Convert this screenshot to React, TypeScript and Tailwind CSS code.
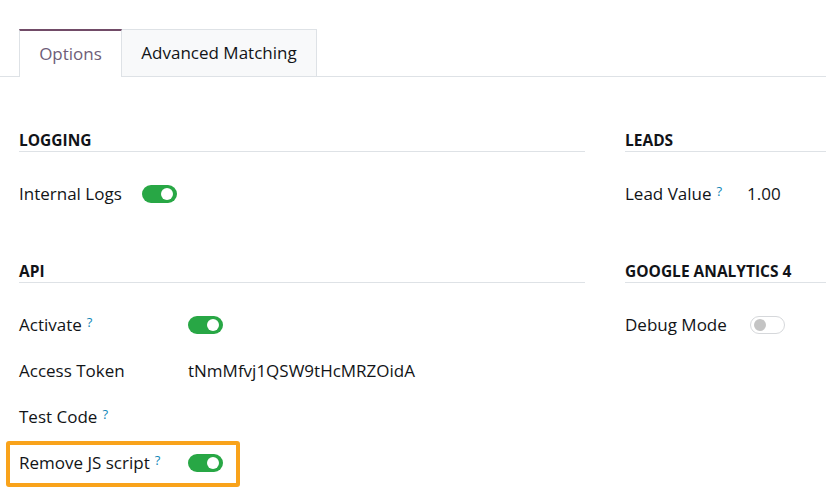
import React from "react";

function Toggle({ on }: { on: boolean }) {
  return on ? (
    <span className="relative inline-block h-[18px] w-[35px] rounded-full bg-[#28a745]">
      <span className="absolute right-[4px] top-[3px] h-[12px] w-[12px] rounded-full bg-white" />
    </span>
  ) : (
    <span className="relative inline-block h-[18px] w-[35px] rounded-full border border-[#d6d8db] bg-white">
      <span className="absolute left-[3px] top-[2px] h-[12px] w-[12px] rounded-full bg-[#c4c4c4]" />
    </span>
  );
}

function Q() {
  return <sup className="relative -top-[4px] ml-[5px] text-[13px] font-normal text-[#1287b8]">?</sup>;
}

function Heading({ children }: { children: React.ReactNode }) {
  return (
    <div className="border-b border-[#dee2e6] pb-px text-[15.5px] font-bold leading-[20px] text-[#111318]">
      {children}
    </div>
  );
}

function Row({
  label,
  help,
  labelW,
  children,
}: {
  label: string;
  help?: boolean;
  labelW: string;
  children?: React.ReactNode;
}) {
  return (
    <div className="flex h-[46px] items-center pb-[3px]">
      <div className={`${labelW} shrink-0 text-[17px] leading-[22px] text-[#121417]`}>
        {label}
        {help && <Q />}
      </div>
      <div className="flex items-center text-[17px] leading-[22px] text-[#121417]">{children}</div>
    </div>
  );
}

export default function App() {
  return (
    <div
      className="h-[496px] w-[826px] overflow-hidden bg-white"
      style={{ fontFamily: '"Open Sans", "Noto Sans", sans-serif' }}
    >
      <div className="pt-[29px]">
        <div className="flex border-b border-[#dee2e6] pl-[19px]">
          <div className="-mb-px flex h-[48px] w-[103px] items-center justify-center border-x border-t-2 border-x-[#dee2e6] border-t-[#714b67] bg-white text-[17px] text-[#6e5d78]">
            Options
          </div>
          <div className="flex h-[47px] w-[195px] items-center justify-center border-r border-t border-[#dee2e6] bg-[#f8f9fa] text-[17px] text-[#121417]">
            Advanced Matching
          </div>
        </div>
      </div>

      <div className="flex gap-[40px] pl-[19px] pt-[53px]">
        <div className="w-[566px] shrink-0">
          <Heading>LOGGING</Heading>
          <div className="mt-[20px]">
            <Row label="Internal Logs" labelW="w-[123px]">
              <Toggle on />
            </Row>
          </div>
          <div className="mt-[43px]">
            <Heading>API</Heading>
          </div>
          <div className="mt-[20px]">
            <Row label="Activate" help labelW="w-[169px]">
              <Toggle on />
            </Row>
            <Row label="Access Token" labelW="w-[169px]">
              tNmMfvj1QSW9tHcMRZOidA
            </Row>
            <Row label="Test Code" help labelW="w-[169px]" />
            <div className="relative">
              <Row label="Remove JS script" help labelW="w-[169px]">
                <Toggle on />
              </Row>
              <div className="pointer-events-none absolute -left-[13px] top-0 h-[46px] w-[234px] rounded-[3px] border-4 border-[#f9a31b]" />
            </div>
          </div>
        </div>

        <div className="w-[566px] shrink-0">
          <Heading>LEADS</Heading>
          <div className="mt-[20px]">
            <Row label="Lead Value" help labelW="w-[122px]">
              1.00
            </Row>
          </div>
          <div className="mt-[43px]">
            <Heading>GOOGLE ANALYTICS 4</Heading>
          </div>
          <div className="mt-[20px]">
            <Row label="Debug Mode" labelW="w-[125px]">
              <Toggle on={false} />
            </Row>
          </div>
        </div>
      </div>
    </div>
  );
}
